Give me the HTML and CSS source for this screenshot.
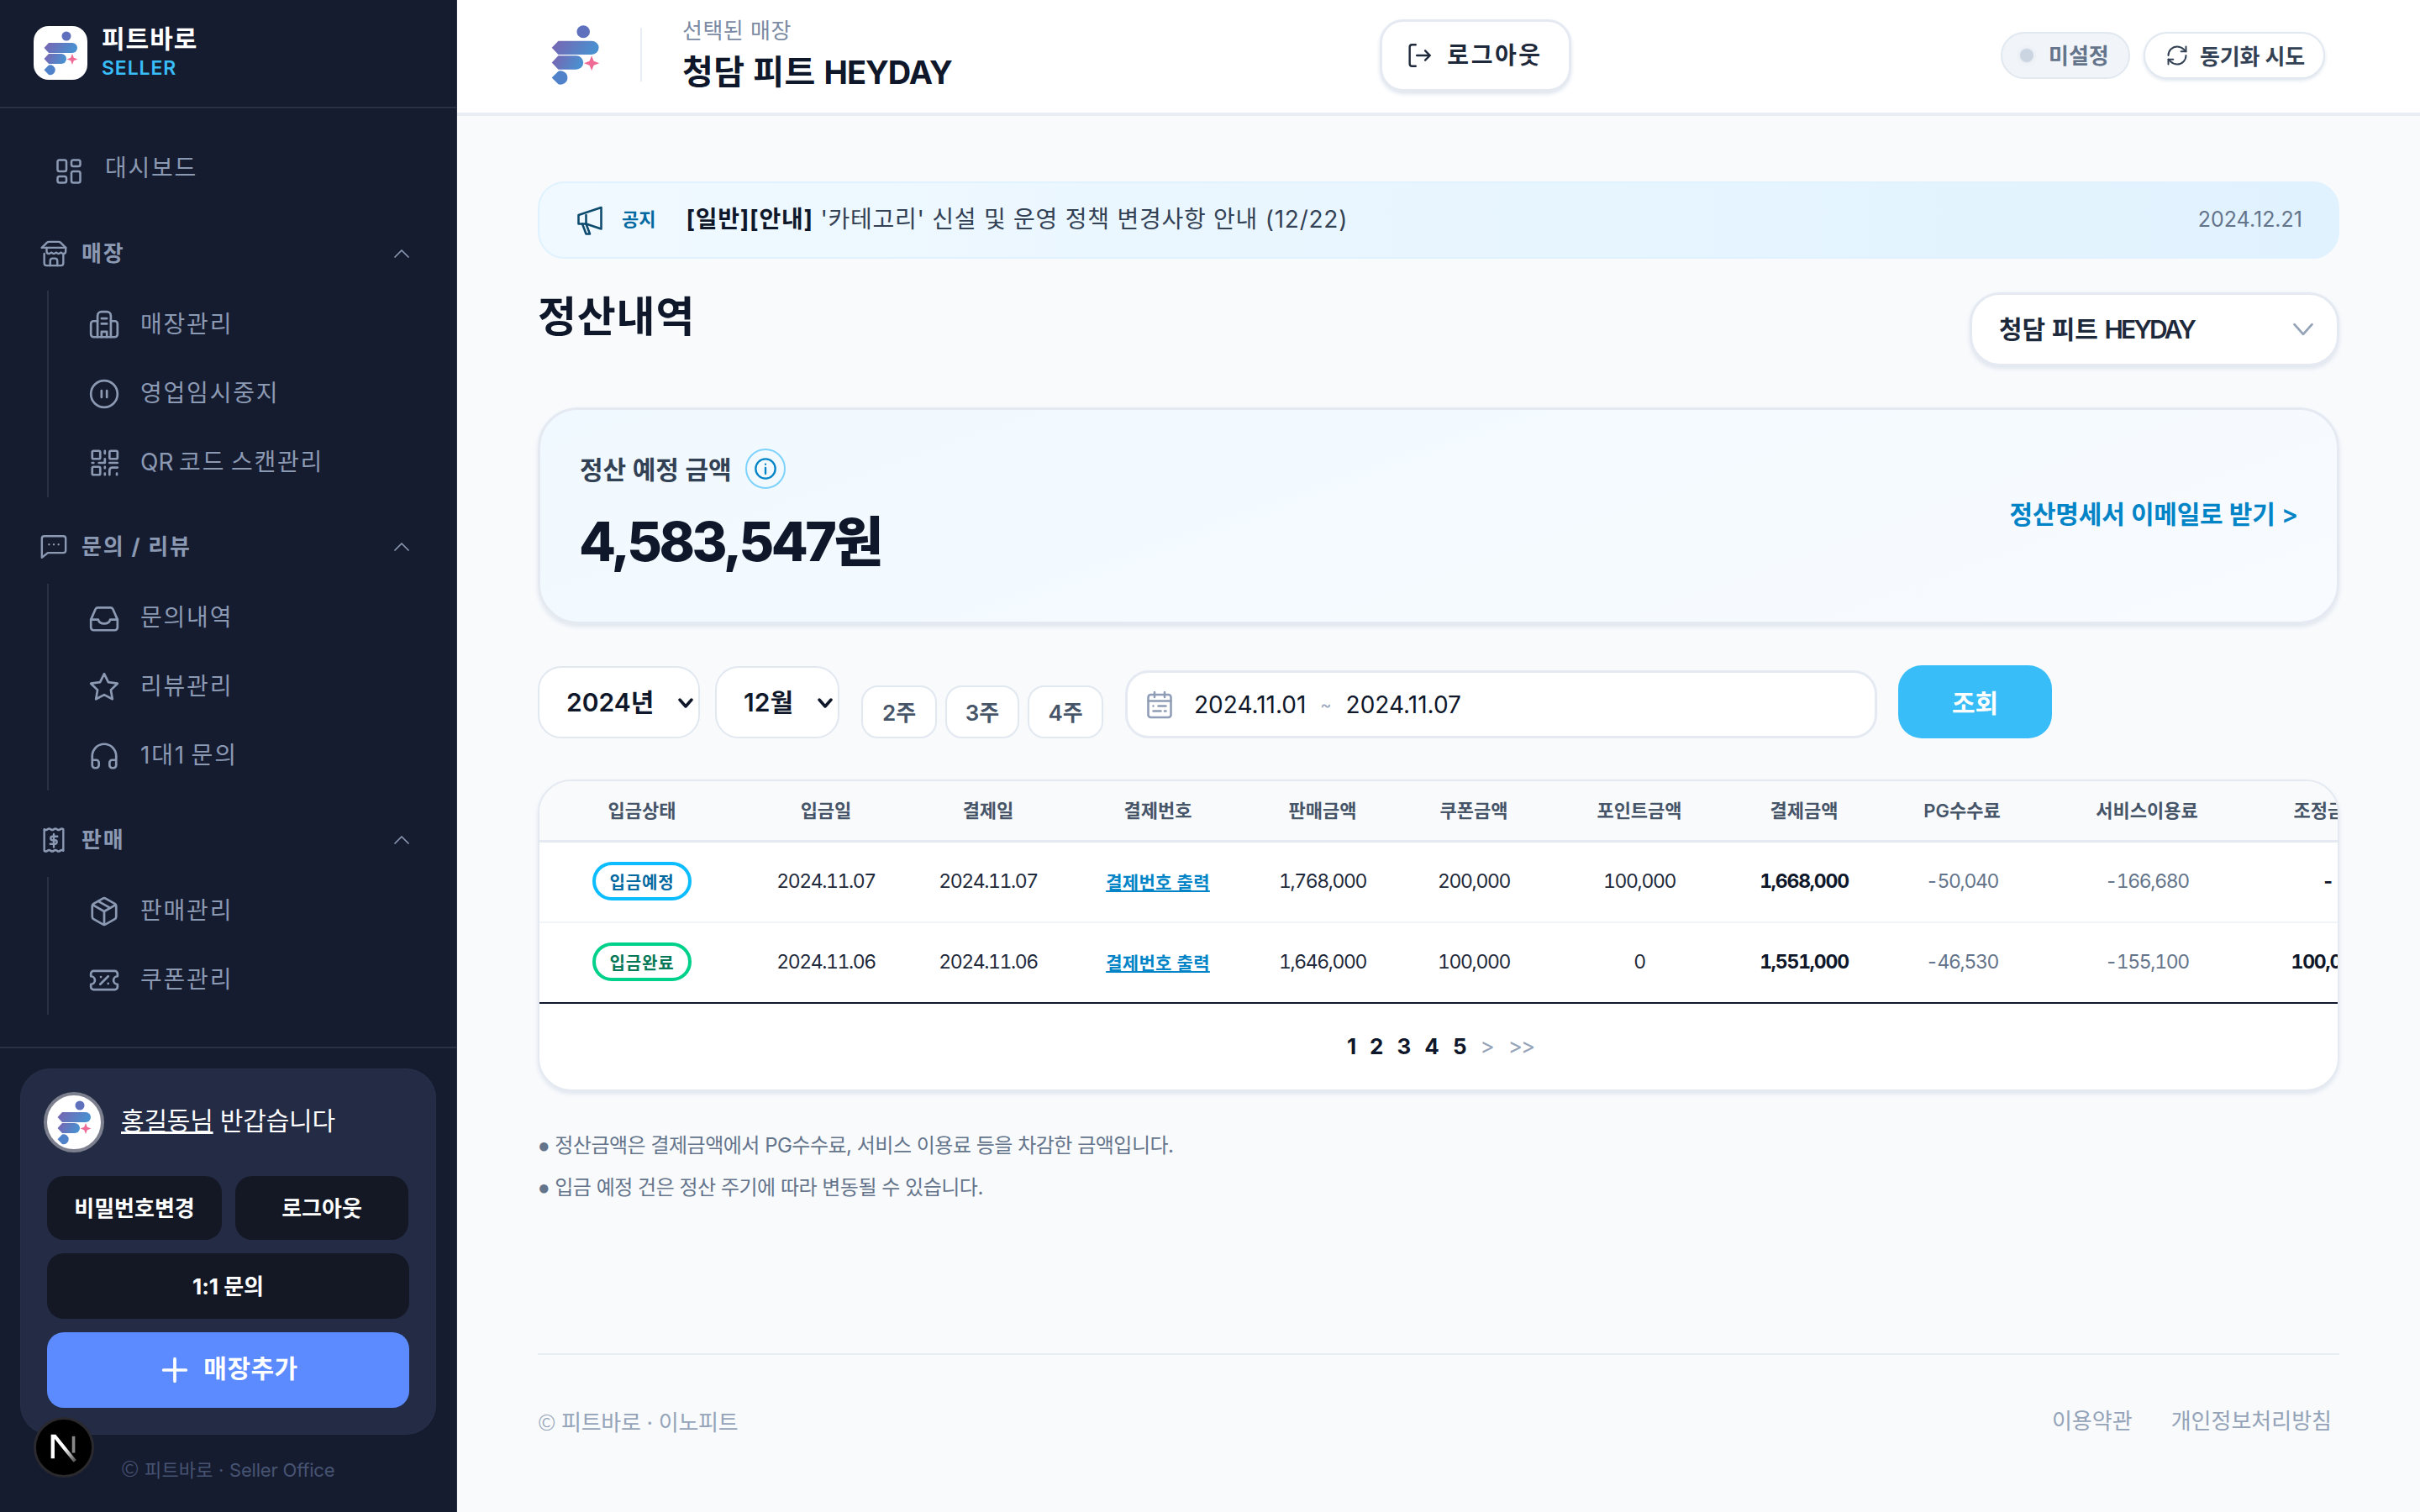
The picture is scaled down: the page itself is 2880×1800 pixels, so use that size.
FILE: index.html
```html
<!DOCTYPE html>
<html lang="ko">
<head>
<meta charset="utf-8">
<title>정산내역</title>
<link rel="stylesheet" href="styles.css">
</head>
<body>
<svg class="defs" width="0" height="0" aria-hidden="true">
  <defs>
    <linearGradient id="lg" x1="0" y1="0" x2="1" y2="0.2">
      <stop offset="0" stop-color="#7a63b0"/>
      <stop offset="1" stop-color="#4a90d0"/>
    </linearGradient>
    <linearGradient id="ng" x1="0" y1="0" x2="1" y2="1">
      <stop offset="0.5" stop-color="#fff"/>
      <stop offset="1" stop-color="#555"/>
    </linearGradient>
    <g id="mark">
      <circle cx="39" cy="12" r="5.5" fill="#5f70bd"/>
      <path d="M18 20h28a6 6 0 0 1 0 12H18l-5.500-6z" fill="url(#lg)"/>
      <path d="M18 33h15a6 6 0 0 1 0 12H18l-5.500-6z" fill="url(#lg)"/>
      <path d="M18 46.500a6 6 0 1 1 0 11.500l-5.500-5.700z" fill="#4f82c8"/>
      <path d="M46 33l1.800 4.700 4.700 1.800-4.700 1.800L46 46l-1.800-4.700-4.700-1.800 4.700-1.800z" fill="#ef6a94"/>
    </g>
  </defs>
</svg>
<div class="app">
  <aside class="sidebar">
    <div class="brand">
      <div class="brand-tile"><svg class="brand-mark" viewBox="0 0 64 64"><use href="#mark"/></svg></div>
      <div class="brand-text">
        <div class="brand-name">피트바로</div>
        <div class="brand-sub">SELLER</div>
      </div>
    </div>
    <nav class="nav">
      <a class="dash">
        <svg class="ico dash-ico" viewBox="0 0 24 24"><rect x="3" y="3" width="7" height="9" rx="1.500"/><rect x="14" y="3" width="7" height="5" rx="1.500"/><rect x="14" y="12" width="7" height="9" rx="1.500"/><rect x="3" y="16" width="7" height="5" rx="1.500"/></svg>
        <span>대시보드</span>
      </a>
      <section>
        <div class="sec-head">
          <svg class="ico sec-ico" viewBox="0 0 24 24"><path d="M2 7l4.400-4.400A2 2 0 0 1 7.800 2h8.400a2 2 0 0 1 1.400.6L22 7"/><path d="M4 12v8a2 2 0 0 0 2 2h12a2 2 0 0 0 2-2v-8"/><path d="M15 22v-4a2 2 0 0 0-2-2h-2a2 2 0 0 0-2 2v4"/><path d="M2 7h20"/><path d="M22 7v3a2 2 0 0 1-2 2 2.700 2.700 0 0 1-2-1 2.700 2.700 0 0 1-2 1 2.700 2.700 0 0 1-2-1 2.700 2.700 0 0 1-2 1 2.700 2.700 0 0 1-2-1 2.700 2.700 0 0 1-2 1 2 2 0 0 1-2-2V7"/></svg>
          <span class="sec-title">매장</span>
          <svg class="ico chev" viewBox="0 0 24 24"><path d="M4 17l8-8 8 8"/></svg>
        </div>
        <ul class="tree">
          <li><svg class="ico" viewBox="0 0 24 24"><path d="M7 21V5a3 3 0 0 1 3-3h4a3 3 0 0 1 3 3v16"/><path d="M7 9H4a2 2 0 0 0-2 2v8a2 2 0 0 0 2 2h16a2 2 0 0 0 2-2v-8a2 2 0 0 0-2-2h-3"/><path d="M10 7h4M10 11h4M10 21v-4h4v4"/></svg><span>매장관리</span></li>
          <li><svg class="ico" viewBox="0 0 24 24"><circle cx="12" cy="12" r="10"/><path d="M10 9.500v5M14 9.500v5"/></svg><span>영업임시중지</span></li>
          <li><svg class="ico" viewBox="0 0 24 24"><rect x="3" y="3" width="6" height="6" rx="1"/><rect x="16" y="3" width="6" height="6" rx="1"/><rect x="3" y="15" width="6" height="6" rx="1"/><path d="M12.500 3v2M12.500 9v3M3 12h1M8 12h4.500M16 12h6M12.500 15v1M12.500 20v1M16 21v-3.500a2 2 0 0 1 2-2h4M21.500 20v1"/></svg><span><span class="lat">QR</span> 코드 스캔관리</span></li>
        </ul>
      </section>
      <section>
        <div class="sec-head">
          <svg class="ico sec-ico" viewBox="0 0 24 24"><path d="M22 15a2 2 0 0 1-2 2H7l-5 4V5a2 2 0 0 1 2-2h16a2 2 0 0 1 2 2z"/><path d="M8 10h.01M12 10h.01M16 10h.01"/></svg>
          <span class="sec-title">문의 / 리뷰</span>
          <svg class="ico chev" viewBox="0 0 24 24"><path d="M4 17l8-8 8 8"/></svg>
        </div>
        <ul class="tree">
          <li><svg class="ico" viewBox="0 0 24 24"><path d="M2 13h5.500c.5 2 2 3 4.500 3s4-1 4.500-3H22"/><path d="M5.500 5.100L2 13v6a2 2 0 0 0 2 2h16a2 2 0 0 0 2-2v-6l-3.500-7.900A2 2 0 0 0 16.700 4H7.300a2 2 0 0 0-1.800 1.100z"/></svg><span>문의내역</span></li>
          <li><svg class="ico" viewBox="0 0 24 24"><polygon points="12 2 15.090 8.260 22 9.270 17 14.140 18.180 21.020 12 17.770 5.820 21.020 7 14.140 2 9.270 8.910 8.260"/></svg><span>리뷰관리</span></li>
          <li><svg class="ico" viewBox="0 0 24 24"><path d="M3 15h3a2 2 0 0 1 2 2v2a2 2 0 0 1-2 2H5a2 2 0 0 1-2-2v-7a9 9 0 0 1 18 0v7a2 2 0 0 1-2 2h-1a2 2 0 0 1-2-2v-2a2 2 0 0 1 2-2h3"/></svg><span>1대1 문의</span></li>
        </ul>
      </section>
      <section>
        <div class="sec-head">
          <svg class="ico sec-ico" viewBox="0 0 24 24"><path d="M4 3q1.300 1.200 2.700 0t2.700 0 2.600 0 2.700 0 2.700 0T20 3v18q-1.300-1.200-2.600 0t-2.700 0-2.700 0-2.600 0-2.700 0T4 21z"/><path d="M15 9h-4a1.500 1.500 0 0 0 0 3.200h2a1.500 1.500 0 0 1 0 3.200H9M12 7v11"/></svg>
          <span class="sec-title">판매</span>
          <svg class="ico chev" viewBox="0 0 24 24"><path d="M4 17l8-8 8 8"/></svg>
        </div>
        <ul class="tree">
          <li><svg class="ico" viewBox="0 0 24 24"><path d="M21 8a2 2 0 0 0-1-1.730l-7-4a2 2 0 0 0-2 0l-7 4A2 2 0 0 0 3 8v8a2 2 0 0 0 1 1.730l7 4a2 2 0 0 0 2 0l7-4A2 2 0 0 0 21 16z"/><path d="M3.300 7l8.700 5 8.700-5M12 22V12M7.500 4.300l9 5.100"/></svg><span>판매관리</span></li>
          <li><svg class="ico" viewBox="0 0 24 24"><path d="M2 9a3 3 0 1 1 0 6v2a2 2 0 0 0 2 2h16a2 2 0 0 0 2-2v-2a3 3 0 1 1 0-6V7a2 2 0 0 0-2-2H4a2 2 0 0 0-2 2z"/><path d="M9.500 9.500h.01M15 9l-6 6M15 14.500h.01"/></svg><span>쿠폰관리</span></li>
        </ul>
      </section>
    </nav>
    <div class="side-foot">
      <div class="user-card">
        <div class="user-row">
          <div class="avatar"><svg class="avatar-mark" viewBox="0 0 64 64"><use href="#mark"/></svg></div>
          <div class="user-text"><u>홍길동님</u> 반갑습니다</div>
        </div>
        <div class="btn-pair">
          <button class="dark-btn"><span>비밀번호변경</span></button>
          <button class="dark-btn"><span>로그아웃</span></button>
        </div>
        <button class="dark-btn wide"><span>1:1 문의</span></button>
        <button class="add-btn"><svg class="plus" viewBox="0 0 24 24"><path d="M12 2v20M2 12h20"/></svg><span>매장추가</span></button>
      </div>
      <div class="copy"><span class="cr">©</span> 피트바로 · <span class="lat">Seller Office</span></div>
      <div class="next-badge"><svg viewBox="0 0 40 40"><path d="M12 28V12h1.500L28 30" fill="none" stroke="url(#ng)" stroke-width="2.600"/><path d="M27 12v12" fill="none" stroke="#888" stroke-width="2.200"/></svg></div>
    </div>
  </aside>

  <main class="main">
    <header class="topbar">
      <div class="top-left">
        <svg class="top-logo" viewBox="12 5.500 41 53" preserveAspectRatio="none"><use href="#mark"/></svg>
        <div class="top-store">
          <div class="top-label">선택된 매장</div>
          <div class="top-name">청담 피트 <span class="lat">HEYDAY</span></div>
        </div>
      </div>
      <button class="top-logout">
        <svg class="ico out-ico" viewBox="0 0 24 24"><path d="M9 3H6a2 2 0 0 0-2 2v14a2 2 0 0 0 2 2h3"/><path d="M10 12h11M17 8l4 4-4 4"/></svg>
        <span>로그아웃</span>
      </button>
      <div class="top-right">
        <div class="pill muted"><i class="dot"></i><span>미설정</span></div>
        <div class="pill sync"><svg class="ico sync-ico" viewBox="0 0 24 24"><path d="M3 12a9 9 0 0 1 9-9 9.750 9.750 0 0 1 6.740 2.740L21 8"/><path d="M21 3v5h-5"/><path d="M21 12a9 9 0 0 1-9 9 9.750 9.750 0 0 1-6.740-2.740L3 16"/><path d="M8 16H3v5"/></svg><span>동기화 시도</span></div>
      </div>
    </header>

    <div class="content">
      <div class="notice">
        <svg class="ico note-ico" viewBox="0 0 24 24"><path d="M3 8l18-6v17L9 15H3z"/><path d="M6 15l3 8h3l-3-8"/><path d="M9 8v7"/></svg>
        <span class="note-tag">공지</span>
        <span class="note-text"><b>[일반][안내]</b> '카테고리' 신설 및 운영 정책 변경사항 안내 (12/22)</span>
        <span class="note-date">2024.12.21</span>
      </div>

      <div class="title-row">
        <h1>정산내역</h1>
        <div class="store-select"><span>청담 피트 <span class="lat">HEYDAY</span></span><svg class="ico sel-chev" viewBox="0 0 24 24"><path d="M3 7l9 10 9-10"/></svg></div>
      </div>

      <div class="summary">
        <div>
          <div class="sum-label"><span>정산 예정 금액</span><span class="info"><svg class="ico" viewBox="0 0 24 24"><circle cx="12" cy="12" r="10"/><path d="M12 11v6M12 7.500h.01"/></svg></span></div>
          <div class="sum-amount">4,583,547원</div>
        </div>
        <a class="sum-link">정산명세서 이메일로 받기 &gt;</a>
      </div>

      <div class="filters">
        <div class="sel-wrap wrap-year">
          <select class="sel"><option>2024년</option></select>
          <svg class="sel-arrow" viewBox="0 0 18 12"><path d="M2 2l7 8 7-8"/></svg>
        </div>
        <div class="sel-wrap wrap-month">
          <select class="sel"><option>12월</option></select>
          <svg class="sel-arrow" viewBox="0 0 18 12"><path d="M2 2l7 8 7-8"/></svg>
        </div>
        <button class="wk wk-a">2주</button>
        <button class="wk wk-b">3주</button>
        <button class="wk wk-a wk-last">4주</button>
        <div class="range">
          <svg class="ico cal" viewBox="0 0 24 24"><rect x="3" y="4" width="18" height="18" rx="2"/><path d="M3 9h18M8 2v4M16 2v4M7 13h.01M11 13h6M7 17h6M16 17h1"/></svg>
          <span>2024.11.01</span><span class="tilde">~</span><span>2024.11.07</span>
        </div>
        <button class="search"><span>조회</span></button>
      </div>

      <div class="table-card">
        <div class="table-scroll">
          <table>
            <thead>
              <tr><th>입금상태</th><th>입금일</th><th>결제일</th><th>결제번호</th><th>판매금액</th><th>쿠폰금액</th><th>포인트금액</th><th>결제금액</th><th>PG수수료</th><th>서비스이용료</th><th>조정금액</th></tr>
            </thead>
            <tbody>
              <tr>
                <td><span class="badge blue">입금예정</span></td><td>2024.11.07</td><td>2024.11.07</td><td><a class="lnk">결제번호 출력</a></td><td>1,768,000</td><td>200,000</td><td>100,000</td><td class="strong">1,668,000</td><td class="dim">-50,040</td><td class="dim">-166,680</td><td class="strong">-</td>
              </tr>
              <tr>
                <td><span class="badge green">입금완료</span></td><td>2024.11.06</td><td>2024.11.06</td><td><a class="lnk">결제번호 출력</a></td><td>1,646,000</td><td>100,000</td><td>0</td><td class="strong">1,551,000</td><td class="dim">-46,530</td><td class="dim">-155,100</td><td class="strong">100,000</td>
              </tr>
            </tbody>
          </table>
        </div>
        <div class="pager"><b>1</b><b>2</b><b>3</b><b>4</b><b>5</b><span>&gt;</span><span class="dbl">&gt;&gt;</span></div>
      </div>

      <div class="notes">
        <p><span class="bul">●</span> 정산금액은 결제금액에서 PG수수료, 서비스 이용료 등을 차감한 금액입니다.</p>
        <p><span class="bul">●</span> 입금 예정 건은 정산 주기에 따라 변동될 수 있습니다.</p>
      </div>

      <footer class="foot">
        <span class="foot-copy"><span class="cr">©</span> 피트바로 · 이노피트</span>
        <div class="foot-links"><span>이용약관</span><span>개인정보처리방침</span></div>
      </footer>
    </div>
  </main>
</div>
</body>
</html>
```

FILE: styles.css
```css
* { box-sizing: border-box; }
html, body { margin: 0; padding: 0; }
body {
  font-family: Inter, "Noto Sans CJK KR", sans-serif;
  background: #f8fafc;
  color: #0f172a;
}
button, select { font-family: inherit; }
.defs { position: absolute; }
.app { display: flex; width: 2880px; height: 1800px; overflow: hidden; }
.ico { fill: none; stroke: currentColor; stroke-width: 1.700; stroke-linecap: round; stroke-linejoin: round; flex: none; }
.cr { font-family: "Noto Sans CJK KR", sans-serif; font-weight: 300; }

/* sidebar */
.sidebar {
  width: 544px; flex: none; height: 1800px; background: #161c2f;
  border-right: 1px solid #2a3146;
  display: flex; flex-direction: column; color: #8b99b3;
}
.brand { height: 129px; flex: none; border-bottom: 2px solid #2a3146; display: flex; align-items: center; gap: 17px; padding: 0 0 2px 40px; }
.brand-tile { width: 64px; height: 64px; border-radius: 18px; background: #fff; }
.brand-mark { display: block; width: 64px; height: 64px; }
.brand-name { color: #fff; font-size: 30px; font-weight: 700; line-height: 36px; letter-spacing: 1px; }
.brand-sub { color: #38bdf8; font-size: 23px; font-weight: 600; line-height: 32px; letter-spacing: 0.900px; margin-top: 1px; }
.nav { padding-top: 30px; display: flex; flex-direction: column; gap: 29px; }
.dash { height: 84px; display: flex; align-items: center; gap: 25px; padding-left: 64px; font-size: 28px; letter-spacing: 1.700px; }
.dash-ico { width: 36px; height: 36px; margin-top: 6px; }
.dash span, .tree span { margin-top: -6px; }
.sec-head { height: 60px; display: flex; align-items: center; padding-left: 47px; padding-right: 53px; }
.sec-ico { width: 34px; height: 34px; }
.sec-title { margin-left: 16px; font-size: 26px; font-weight: 700; letter-spacing: 1.800px; margin-top: -6px; }
.chev { width: 24px; height: 24px; margin-left: auto; margin-top: -2px; }
.tree { list-style: none; margin: 14px 0 0 56px; padding: 0 0 0 48px; border-left: 2px solid #2a3146; }
.tree li { height: 82px; display: flex; align-items: center; gap: 24px; font-size: 28px; letter-spacing: 1.800px; word-spacing: -3px; }
.tree .ico { width: 38px; height: 38px; margin-left: -1px; }
.tree .lat { margin-top: 0; letter-spacing: 0; }
.side-foot { margin-top: auto; position: relative; border-top: 2px solid #2a3146; padding: 24px 24px 0; height: 554px; }
.user-card { background: #232b45; border-radius: 36px; padding: 28px 32px 32px; height: 436px; box-shadow: 0 0 0 1px #283049 inset; }
.user-row { display: flex; align-items: center; gap: 20px; height: 72px; margin-bottom: 28px; margin-left: -4px; }
.avatar { width: 72px; height: 72px; border-radius: 50%; background: #fff; border: 4px solid #7c808e; flex: none; display: flex; align-items: center; justify-content: center; }
.avatar-mark { width: 64px; height: 64px; }
.user-text { color: #fff; font-size: 30px; line-height: 40px; margin-top: -4px; letter-spacing: -0.200px; }
.btn-pair { display: grid; grid-template-columns: 208px 206px; gap: 16px; margin-bottom: 16px; }
.dark-btn { height: 76px; border: 0; border-radius: 20px; background: #141824; color: #fff; font-size: 26px; font-weight: 700; padding: 0 0 3px; }
.dark-btn.wide { width: 100%; height: 78px; margin-bottom: 16px; display: block; }
.add-btn { width: 100%; height: 90px; border: 0; border-radius: 20px; background: #5b8bff; color: #fff; font-size: 30px; font-weight: 700; display: flex; align-items: center; justify-content: center; gap: 18px; letter-spacing: 0.5px; padding: 0; }
.add-btn span { margin-top: -8px; }
.plus { width: 32px; height: 32px; stroke: #fff; stroke-width: 2.800; stroke-linecap: round; fill: none; margin-left: 4px; }
.copy { margin: 23px 0 0 120px; color: #475372; font-size: 22px; line-height: 32px; letter-spacing: 0.200px; }
.copy .cr { font-size: 26px; }
.copy .lat { letter-spacing: -0.200px; }
.next-badge { position: absolute; left: 40px; top: 439px; width: 72px; height: 72px; border-radius: 50%; background: #000; border: 3px solid #2a2a2e; }
.next-badge svg { display: block; width: 66px; height: 66px; }

/* main */
.main { flex: 1; min-width: 0; display: flex; flex-direction: column; }
.topbar { height: 138px; flex: none; background: #fff; border-bottom: 4px solid #e8edf3; display: flex; align-items: center; position: relative; padding: 0 113px 4px 112px; }
.top-left { display: flex; align-items: center; width: 986px; }
.top-logo { width: 58px; height: 72px; }
.top-store { margin-left: 48px; padding-left: 48px; padding-top: 2px; border-left: 2px solid #e8edf3; height: 64px; display: flex; flex-direction: column; justify-content: center; }
.top-label { color: #7b8aa3; font-size: 26px; line-height: 36px; letter-spacing: 0.5px; }
.top-name { color: #0f172a; font-size: 40px; font-weight: 700; line-height: 54px; letter-spacing: 0.4px; white-space: nowrap; margin-top: 4px; }
.top-name .lat { font-size: 38px; letter-spacing: -1.000px; }
.top-logout { width: 228px; height: 86px; margin-top: 2px; border: 3px solid #e5eaf2; border-radius: 28px; background: #fff; box-shadow: 0 3px 5px #dfe5ee; display: flex; align-items: center; justify-content: center; gap: 16px; font-size: 28px; font-weight: 600; color: #1e293b; letter-spacing: 2.600px; padding: 0; }
.out-ico { width: 34px; height: 34px; margin-left: -4px; }
.top-logout span { margin-top: -4px; }
.top-right { margin-left: auto; display: flex; gap: 16px; margin-top: 2px; }
.pill { height: 56px; border-radius: 28px; display: flex; align-items: center; font-size: 26px; font-weight: 600; }
.pill.muted { width: 154px; background: #f1f5f9; border: 2px solid #e2e8f0; color: #64748b; padding-left: 21px; gap: 18px; }
.pill.muted span { margin-top: -4px; }
.dot { width: 16px; height: 16px; border-radius: 50%; background: #cbd5e1; box-shadow: 0 0 6px #dde3ec; }
.pill.sync { width: 216px; background: #fff; border: 2px solid #e2e8f0; box-shadow: 0 2px 4px #dfe5ee; color: #334155; padding-left: 24px; gap: 13px; letter-spacing: -0.2px; }
.pill.sync span { margin-top: -2px; }
.sync-ico { width: 28px; height: 28px; }

.content { padding: 78px 96px 0; flex: 1; display: flex; flex-direction: column; }
.notice { height: 92px; border-radius: 32px; border: 2px solid #e0f2fe; background: linear-gradient(90deg, #f0f9ff, #e0f2fe); display: flex; align-items: center; padding: 0 42px 6px 42px; }
.note-ico { width: 36px; height: 36px; color: #0c4a6e; margin-top: 6px; }
.note-tag { margin-left: 20px; color: #0369a1; font-size: 22px; font-weight: 600; }
.note-text { margin-left: 36px; color: #334155; font-size: 28px; letter-spacing: 0.750px; }
.note-text b { color: #0f172a; font-weight: 700; }
.note-date { margin-left: auto; color: #64748b; font-size: 25px; margin-top: 4px; }
.title-row { display: flex; justify-content: space-between; align-items: flex-start; margin-top: 40px; }
h1 { margin: 0; font-size: 50px; font-weight: 700; line-height: 58px; letter-spacing: 0.8px; }
.store-select { width: 440px; height: 88px; background: #fff; border: 3px solid #e5eaf2; border-radius: 36px; box-shadow: 0 3px 5px #dfe5ee; display: flex; align-items: center; justify-content: space-between; padding: 0 26px 4px 32px; font-size: 30px; font-weight: 600; color: #1e293b; }
.store-select .lat { letter-spacing: -2.800px; }
.sel-chev { width: 28px; height: 28px; color: #94a3b8; stroke-width: 2.400; margin-top: 4px; }
.summary { margin-top: 49px; height: 258px; border-radius: 48px; border: 3px solid #e5eaf2; box-shadow: 0 3px 5px #dfe5ee; background: linear-gradient(160deg, #f0f9ff, #f8fbff); display: flex; align-items: center; justify-content: space-between; padding: 0 48px; }
.sum-label { display: flex; align-items: center; gap: 16px; font-size: 30px; font-weight: 600; color: #334155; margin-top: -6px; margin-left: -1px; }
.info { width: 48px; height: 48px; border-radius: 50%; border: 2px solid #7dd3fc; color: #0284c7; display: flex; align-items: center; justify-content: center; margin-top: 2px; }
.info .ico { width: 28px; height: 28px; stroke-width: 2; }
.sum-amount { font-size: 64px; font-weight: 800; line-height: 90px; margin-top: 18px; margin-left: -2px; letter-spacing: -3.500px; color: #0f172a; }
.sum-link { color: #0284c7; font-size: 30px; font-weight: 600; margin-top: -9px; letter-spacing: -0.200px; margin-right: -2px; }
.filters { margin-top: 49px; height: 87px; display: flex; align-items: flex-end; }
.sel-wrap { position: relative; height: 86px; }
.wrap-year { width: 193px; margin-right: 18px; }
.wrap-month { width: 148px; margin-right: 26px; }
.sel { appearance: none; display: block; width: 100%; height: 86px; border: 2px solid #e2e8f0; border-radius: 28px; background: #fff; color: #0f172a; font-size: 30px; font-weight: 600; padding: 0 0 0 32px; }
.sel-arrow { position: absolute; right: 8px; top: 38px; width: 18px; height: 12px; fill: none; stroke: #0f172a; stroke-width: 3.500; stroke-linecap: round; stroke-linejoin: round; pointer-events: none; }
.wk { height: 63px; border: 2px solid #e2e8f0; border-radius: 20px; background: #fff; color: #475569; font-size: 26px; font-weight: 600; margin-right: 10px; padding: 0 0 2px; }
.wk-a { width: 90px; }
.wk-b { width: 88px; }
.wk-last { margin-right: 26px; }
.range { width: 895px; height: 81px; border: 3px solid #e5eaf2; border-radius: 28px; background: #fff; display: flex; align-items: center; padding-left: 20px; font-size: 28px; color: #0f172a; }
.cal { width: 36px; height: 36px; color: #8e9cb5; margin-right: 23px; }
.tilde { margin: 0 17px; color: #94a3b8; font-size: 20px; }
.search { width: 183px; height: 87px; margin-left: 25px; border: 0; border-radius: 28px; background: #38bdf8; color: #fff; font-size: 30px; font-weight: 700; padding: 0 0 2px; }
.table-card { margin-top: 49px; height: 371px; background: #fff; border: 2px solid #e5eaf2; border-radius: 40px; box-shadow: 0 3px 5px #dfe5ee; overflow: hidden; }
.table-scroll { overflow: hidden; }
table { border-collapse: separate; border-spacing: 0; table-layout: fixed; width: 2222px; }
th:nth-child(1) { width: 244px; } th:nth-child(2) { width: 194px; } th:nth-child(3) { width: 192px; }
th:nth-child(4) { width: 212px; } th:nth-child(5) { width: 180px; } th:nth-child(6) { width: 180px; }
th:nth-child(7) { width: 214px; } th:nth-child(8) { width: 178px; } th:nth-child(9) { width: 198px; }
th:nth-child(10) { width: 242px; } th:nth-child(11) { width: 188px; }
th { height: 73px; background: #f8fafc; border-bottom: 3px solid #e5eaf2; color: #475569; font-size: 22px; font-weight: 600; text-align: center; padding: 0 0 4px; }
td { height: 96px; text-align: center; font-size: 23px; letter-spacing: -1.400px; font-variant-numeric: tabular-nums; color: #1e293b; padding: 0 0 2px; border-bottom: 2px solid #f1f5f9; white-space: nowrap; }
tbody tr:last-child td { border-bottom: 2px solid #0f172a; }
td.strong { font-weight: 700; color: #0f172a; letter-spacing: -1.200px; }
td.dim { color: #64748b; }
.lnk { color: #0284c7; text-decoration: underline; font-size: 21px; font-weight: 600; letter-spacing: 0.3px; }
.badge { display: inline-flex; align-items: center; justify-content: center; width: 118px; height: 46px; border-radius: 23px; font-size: 20px; font-weight: 700; border: 4px solid; background: #fff; letter-spacing: 0.8px; vertical-align: middle; }
.badge.blue { border-color: #0bbcff; color: #0369a1; }
.badge.green { border-color: #00d18a; color: #047857; }
.pager { height: 102px; display: flex; align-items: center; justify-content: center; gap: 16px; font-size: 26px; padding: 0 0 2px 4px; }
.pager b { font-weight: 700; color: #0f172a; }
.pager span { color: #94a3b8; font-size: 26px; font-weight: 400; }
.pager .dbl { letter-spacing: -2px; }
.notes { margin-top: 40px; color: #64748b; font-size: 24px; letter-spacing: -0.500px; }
.bul { font-family: "Liberation Sans", sans-serif; }
.notes p { margin: 0; height: 50px; line-height: 50px; }
.foot { margin-top: 172px; border-top: 2px solid #e8edf3; padding-top: 60px; display: flex; justify-content: space-between; color: #94a3b8; font-size: 26px; line-height: 38px; }
.foot-copy { letter-spacing: -0.300px; }
.foot-links { display: flex; gap: 46px; padding-right: 9px; }
```
